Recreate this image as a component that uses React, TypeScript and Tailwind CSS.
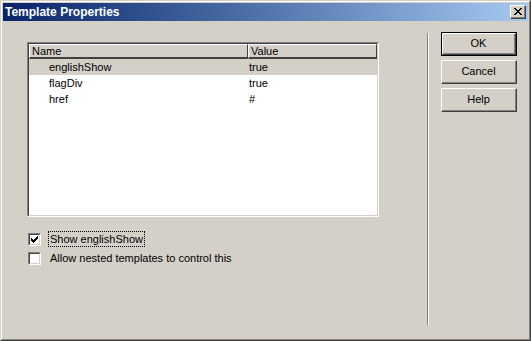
const rows = [
  { name: 'englishShow', value: 'true', selected: true },
  { name: 'flagDiv', value: 'true', selected: false },
  { name: 'href', value: '#', selected: false },
];

const font = { fontFamily: '"Liberation Sans", Arial, sans-serif' };

const Checkbox = ({ checked }: { checked: boolean }) => (
  <div className="w-[13px] h-[13px] border-t border-l border-t-[#808080] border-l-[#808080] border-b border-r border-b-white border-r-white">
    <div className="w-full h-full bg-white border-t border-l border-t-[#404040] border-l-[#404040] border-b border-r border-b-[#d4d0c8] border-r-[#d4d0c8] flex items-center justify-center">
      {checked && (
        <svg width="7" height="7" viewBox="0 0 7 7" shapeRendering="crispEdges">
          <path d="M0 2h1v3h-1zM1 3h1v3h-1zM2 4h1v3h-1zM3 3h1v3h-1zM4 2h1v3h-1zM5 1h1v3h-1zM6 0h1v3h-1z" fill="#000" />
        </svg>
      )}
    </div>
  </div>
);

const Button = ({ label, isDefault }: { label: string; isDefault?: boolean }) => (
  <div className={`w-[76px] h-[24px] ${isDefault ? 'border border-black' : ''}`}>
    <div className="w-full h-full border-t border-l border-t-white border-l-white border-b border-r border-b-[#404040] border-r-[#404040]">
      <div className="w-full h-full border-b border-r border-b-[#808080] border-r-[#808080] flex items-center justify-center text-[11px] text-black">
        {label}
      </div>
    </div>
  </div>
);

export default function App() {
  return (
    <div style={font} className="w-[531px] h-[341px] bg-[#d4d0c8] border-t border-l border-t-[#d4d0c8] border-l-[#d4d0c8] border-b border-r border-b-[#404040] border-r-[#404040]">
      <div className="w-full h-full border-t border-l border-t-white border-l-white border-b border-r border-b-[#808080] border-r-[#808080] p-px flex flex-col">
        {/* title bar */}
        <div className="h-[18px] flex items-center justify-between bg-gradient-to-r from-[#0a246a] to-[#a6caf0] pl-[2px] pr-[2px]">
          <span className="text-white font-bold text-[12px] leading-none">Template Properties</span>
          <div className="w-[16px] h-[14px] bg-[#d4d0c8] border-t border-l border-t-white border-l-white border-b border-r border-b-[#404040] border-r-[#404040]">
            <div className="w-full h-full border-b border-r border-b-[#808080] border-r-[#808080] flex items-center justify-center">
              <svg width="8" height="7" viewBox="0 0 8 7" shapeRendering="crispEdges">
                <path d="M0 0h2v1h-2zM6 0h2v1h-2zM1 1h2v1h-2zM5 1h2v1h-2zM2 2h4v1h-4zM3 3h2v1h-2zM2 4h4v1h-4zM1 5h2v1h-2zM5 5h2v1h-2zM0 6h2v1h-2zM6 6h2v1h-2z" fill="#000" />
              </svg>
            </div>
          </div>
        </div>

        {/* body */}
        <div className="flex-1 flex items-start pl-[24px]">
          <div className="mt-[21px] w-[352px] flex flex-col">
            <div className="h-[175px] border-t border-l border-t-[#808080] border-l-[#808080] border-b border-r border-b-white border-r-white">
              <div className="w-full h-full bg-white border-t border-l border-t-[#404040] border-l-[#404040] border-b border-r border-b-[#d4d0c8] border-r-[#d4d0c8] text-[11px] text-black">
                <div className="flex h-[15px] bg-[#d4d0c8]">
                  <div className="w-[219px] border-t border-l border-t-white border-l-white border-b-2 border-r border-b-[#404040] border-r-[#404040] pl-[2px] flex items-center leading-none">
                    Name
                  </div>
                  <div className="flex-1 border-t border-l border-t-white border-l-white border-b-2 border-r border-b-[#404040] border-r-[#404040] pl-[2px] flex items-center leading-none">
                    Value
                  </div>
                </div>
                {rows.map((r) => (
                  <div key={r.name} className={`flex h-[16px] items-center ${r.selected ? 'bg-[#d4d0c8]' : ''}`}>
                    <div className="w-[219px] pl-[20px]">{r.name}</div>
                    <div className="flex-1 pl-[1px]">{r.value}</div>
                  </div>
                ))}
              </div>
            </div>

            <div className="mt-[14px] flex flex-col gap-[3px] text-[11px] text-black">
              <div className="flex items-center ml-px">
                <Checkbox checked />
                <span className="ml-[7px] px-px border border-dotted border-black leading-[14px]">Show englishShow</span>
              </div>
              <div className="flex items-center ml-px">
                <Checkbox checked={false} />
                <span className="ml-[7px] px-px border border-transparent leading-[14px]">Allow nested templates to control this</span>
              </div>
            </div>
          </div>

          <div className="ml-[48px] mt-[12px] h-[292px] w-[2px] flex">
            <div className="w-px h-full bg-[#808080]" />
            <div className="w-px h-full bg-white" />
          </div>

          <div className="ml-[12px] mt-[11px] flex flex-col gap-[4px]">
            <Button label="OK" isDefault />
            <Button label="Cancel" />
            <Button label="Help" />
          </div>
        </div>
      </div>
    </div>
  );
}
